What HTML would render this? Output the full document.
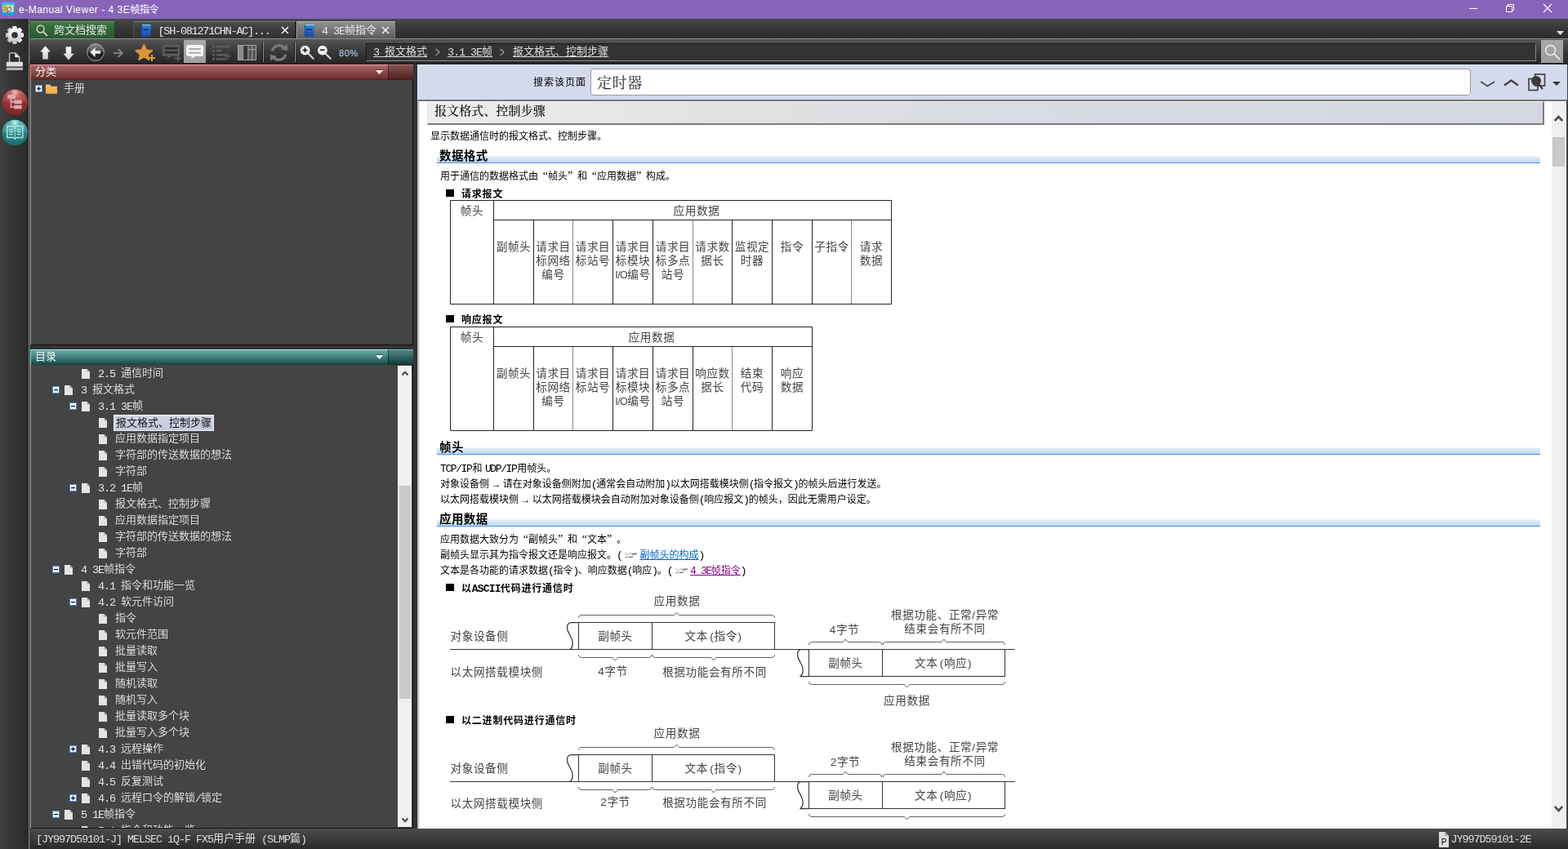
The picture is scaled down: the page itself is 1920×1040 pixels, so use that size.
<!DOCTYPE html>
<html lang="zh-CN">
<head>
<meta charset="utf-8">
<title>e-Manual Viewer - 4 3E帧指令</title>
<style>
*{box-sizing:border-box}
html,body{margin:0;padding:0;width:1920px;height:1040px;overflow:hidden;background:#333}
body{position:relative;font-family:"Liberation Mono","Noto Sans CJK SC",sans-serif;font-size:13px;color:#ddd}
.abs{position:absolute}
svg{position:absolute;overflow:visible}
#tabstrip,#crumb,#lp1,#lp2,.phead,#doc,#status,.gs{will-change:transform}
/* ---------- title bar ---------- */
#titlebar{position:absolute;left:0;top:0;width:1920px;height:23px;background:#8764b8}
#titlebar .ttl{position:absolute;left:23px;top:4px;font:12px/16px "Liberation Sans","Noto Sans CJK SC",sans-serif;color:#fff;white-space:nowrap;letter-spacing:.5px}
#titlebar .ttl b{font-weight:400;letter-spacing:-.3px}
/* ---------- tab strip ---------- */
#tabstrip{position:absolute;left:0;top:23px;width:1920px;height:24px;background:linear-gradient(#484848,#3a3a3a 40%,#2c2c2c)}
.tab{position:absolute;top:3px;height:21px;white-space:nowrap;font:13px/21px "Liberation Mono","Noto Sans CJK SC",sans-serif;font-weight:400;color:#e6e6e6}
#tab1{left:37px;width:104px;background:linear-gradient(#3f7843,#33683a 40%,#2b5a30);border-top:1px solid #5c9a5e;border-right:1px solid #1f3f22}
#tab2{left:163px;width:199px;background:linear-gradient(#4d4d4d,#3a3a3a 50%,#333);border-top:1px solid #7a7a7a;border-left:1px solid #555;border-right:1px solid #1c1c1c}
#tab3{left:363px;width:121px;height:22px;background:linear-gradient(#909090,#7a7a7a 40%,#595959);border-top:1px solid #b0b0b0;border-left:1px solid #a0a0a0;border-right:1px solid #7c7c7c;z-index:3}
.tab .t{position:absolute;top:1px;line-height:20px}
/* ---------- toolbar ---------- */
#toolbar{position:absolute;left:37px;top:47px;width:1883px;height:32px;background:linear-gradient(#585858 0,#545454 2px,#454545 9px,#383838 17px,#2e2e2e 25px,#272727 30px,#202020 32px)}
#crumb{position:absolute;left:411px;top:6px;width:1433px;height:22px;background:#333;border:1px solid #1a1a1a;border-bottom-color:#8a8a8a;border-right-color:#8a8a8a;font:13px/20px "Liberation Mono","Noto Sans CJK SC",sans-serif;font-weight:400;color:#dcdcdc;white-space:nowrap}
#crumb>span{position:absolute;top:0;text-decoration:underline;text-underline-offset:2px}
#crumb i{position:absolute;top:0;font-style:normal;color:#b4b4b4;font-family:'Liberation Sans',sans-serif;font-size:14px;transform:scale(.68,1.3);transform-origin:0 62%}
/* ---------- sidebar ---------- */
#sidebar{position:absolute;left:0;top:23px;width:37px;height:1017px;background:linear-gradient(90deg,#3f3f3f 0,#353535 16px,#2a2a2a 34px)}
/* ---------- left panel ---------- */
#lp1{position:absolute;left:37px;top:98px;width:469px;height:325px;background:#444;border-left:1px solid #979797;border-right:1px solid #151515;border-bottom:1px solid #111}
.phead{position:absolute;left:37px;width:469px;height:19px;font:13px/17px "Liberation Mono","Noto Sans CJK SC",sans-serif;font-weight:400;color:#fff}
.phead b{position:absolute;left:5px;top:1px;font-weight:400;color:#f2f2f2}
#ph1{top:79px;background:linear-gradient(#ee9c9c 0,#ee9c9c 1px,#ab6a6a 1px,#965454 35%,#7c3c3c 70%,#672b2b 94%,#4c1818 100%);border-left:1px solid #e07c7c}
#ph2{top:428px;background:linear-gradient(#a2ece8 0,#a2ece8 1px,#64aaa4 1px,#4f908c 35%,#2f6865 70%,#1d4b49 94%,#143c3c 100%);border-left:1px solid #7ad6d4}
.phead .btn{position:absolute;right:0;top:0;width:31px;height:19px;border-left:1px solid rgba(0,0,0,.45);background:rgba(0,0,0,.22)}
#lp2{position:absolute;left:37px;top:447px;width:469px;height:568px;background:#444;border-left:1px solid #979797;border-right:1px solid #151515;border-bottom:1px solid #151515;overflow:hidden}
.row{position:absolute;left:0;height:20px;white-space:nowrap;font:13px/20px "Liberation Mono","Noto Sans CJK SC",sans-serif;font-weight:350;color:#e6e6e6}
.row .tx{position:absolute;top:2px;line-height:18px}
.row .sel{top:1px;height:20px;line-height:19px;width:123px;padding-left:2px;background:linear-gradient(#d2d8e8,#c2c9db);border:1px solid #eef1f8;color:#111;font-weight:400}
.l{font-size:13.5px;letter-spacing:-1.1px;line-height:0;position:relative;top:1px}
.l14{letter-spacing:-1.4px}
.l12{font-size:13px;letter-spacing:-1.4px;line-height:0}
.ql,.qr{display:inline-block;line-height:0;width:12px;font-family:"Liberation Serif","Noto Sans CJK SC",serif;font-size:14px}
.ql{text-align:right}.qr{text-align:left}
.ar{display:inline-block;line-height:0;width:16.8px;text-align:center;font-family:"Liberation Sans","Noto Sans CJK SC",sans-serif}
.hand{display:inline-block;line-height:0;width:22px;text-align:center}
/* ---------- content ---------- */
#content{position:absolute;left:511px;top:79px;width:1409px;height:936px;background:#fff;border-right:2px solid #404040}
#sbar{position:absolute;left:0;top:0;width:1408px;height:45px;background:#d3daec;border-bottom:2px solid #747474;border-left:1px solid #e3eaff;border-top:1px solid #e3eaff;z-index:2}
#doc{position:absolute;left:0;top:44px;width:1389px;height:892px;border-left:2px solid #b9b9b9;overflow:hidden;color:#000;font:12px/19px "Liberation Mono","Noto Sans CJK SC",sans-serif;font-weight:400}
.p{position:absolute;white-space:nowrap;line-height:16px}
.h2{position:absolute;left:22px;width:1351px;height:17px;background:linear-gradient(rgba(255,255,255,0) 0,rgba(255,255,255,0) 7px,#e4edf8 8px,#c5d9ee 14.5px,#3f92ea 15.2px,#3f92ea 16.4px,rgba(255,255,255,0) 16.5px)}
.h2 b{position:absolute;left:3px;top:0px;font:700 14.5px/16px "Liberation Mono","Noto Sans CJK SC",sans-serif;white-space:nowrap;letter-spacing:.4px}
.h3{position:absolute;white-space:nowrap;font:700 12px/16px "Liberation Mono","Noto Sans CJK SC",sans-serif;letter-spacing:.8px}
.h3 .l12{font-weight:700;letter-spacing:-.8px}
.sq{position:absolute;width:10px;height:9px;background:#000}
a.lk{color:#0066cc;text-decoration:underline;text-underline-offset:1px}
a.vl{color:#800080;text-decoration:underline;text-underline-offset:1px}
.fig{font-family:"Liberation Sans","Noto Sans CJK SC",sans-serif}
/* ---------- status bar ---------- */
.st{line-height:22px;height:22px;margin-top:1.5px}
#status{position:absolute;left:37px;top:1015px;width:1883px;height:25px;background:linear-gradient(#4b4b4b,#3c3c3c 45%,#2b2b2b);font:13px/22px "Liberation Mono","Noto Sans CJK SC",sans-serif;font-weight:400;color:#dcdcdc;white-space:nowrap}
</style>
</head>
<body>
<!-- ================= TITLE BAR ================= -->
<div id="titlebar">
  <svg style="left:2px;top:3px" width="16" height="16" viewBox="0 0 16 16">
    <defs><linearGradient id="gIco" x1="0" y1="0" x2="0" y2="1"><stop offset="0" stop-color="#2fc4ff"/><stop offset=".5" stop-color="#22aef6"/><stop offset="1" stop-color="#1a9cf0"/></linearGradient>
    <linearGradient id="gGold" x1="0" y1="0" x2="1" y2="1"><stop offset="0" stop-color="#f6d860"/><stop offset="1" stop-color="#d79a14"/></linearGradient></defs>
    <rect x="0" y="0" width="16" height="16" rx="1" fill="url(#gIco)"/>
    <path d="M7 3.2 H14.6 V11.6 H7 Z" fill="#fbf6ea"/>
    <path d="M9.6 2.6 V8 M11.4 2.4 V8 M14.2 3.2 V11.4" stroke="#c99a2a" stroke-width="1"/>
    <path d="M1.4 4.4 L5.2 2.4 L6.9 3 V11.4 L3.2 12 L1.4 11 Z" fill="url(#gGold)"/>
    <path d="M3 5.6 h2 M3 8.6 h1.6" stroke="#a06a08" stroke-width="1.2"/>
    <path d="M2.2 11.4 L7.6 10.8 L13.8 11.4" stroke="#d8cfa8" stroke-width=".9" fill="none"/>
    <circle cx="9.4" cy="8.3" r="2.5" fill="#cfe0d6" fill-opacity=".85" stroke="#23a070" stroke-width="1.1"/>
    <path d="M7.8 10.6 L6 13.6" stroke="#ea5a14" stroke-width="1.5"/>
  </svg>
  <div class="ttl">e-Manual Viewer - 4 3E<b>帧指令</b></div>
  <svg style="left:1799px;top:10px" width="10" height="1"><rect width="10" height="1" fill="#fff"/></svg>
  <svg style="left:1844px;top:5px" width="10" height="10" viewBox="0 0 10 10"><path d="M2.5 2.5 V.5 H9.5 V7.5 H7.5" fill="none" stroke="#fff" stroke-width="1"/><rect x=".5" y="2.5" width="7" height="7" fill="none" stroke="#fff" stroke-width="1"/></svg>
  <svg style="left:1890px;top:5px" width="10" height="10" viewBox="0 0 10 10"><path d="M0 0 L10 10 M10 0 L0 10" stroke="#fff" stroke-width="1.1"/></svg>
</div>

<!-- ================= TAB STRIP ================= -->
<div id="tabstrip">
  <div class="tab" id="tab1">
    <svg style="left:7px;top:3px" width="15" height="15" viewBox="0 0 15 15"><circle cx="5.6" cy="5.6" r="4.4" fill="none" stroke="#e2e2e2" stroke-width="1.3"/><path d="M8.8 8.8 L13.4 13.4" stroke="#e2e2e2" stroke-width="1.6" stroke-linecap="round"/></svg>
    <span class="t" style="left:29px">跨文档搜索</span>
  </div>
  <div class="tab" id="tab2">
    <svg class="book" style="left:8px;top:3px" width="13" height="15" viewBox="0 0 13 16" preserveAspectRatio="none"><use href="#book"/></svg>
    <span class="t" style="left:29.5px"><span class="l" style="letter-spacing:-1.25px">[SH-081271CHN-AC]...</span></span>
    <svg style="left:180px;top:5px" width="10" height="10" viewBox="0 0 10 10"><path d="M1 1 L9 9 M9 1 L1 9" stroke="#f0f0f0" stroke-width="1.6"/></svg>
  </div>
  <div class="tab" id="tab3">
    <svg class="book" style="left:8px;top:3px" width="13" height="15" viewBox="0 0 13 16" preserveAspectRatio="none"><use href="#book"/></svg>
    <span class="t" style="left:30px"><span class="l">4 3E</span>帧指令</span>
    <svg style="left:103px;top:5px" width="10" height="10" viewBox="0 0 10 10"><path d="M1 1 L9 9 M9 1 L1 9" stroke="#f0f0f0" stroke-width="1.6"/></svg>
  </div>
  <svg style="left:1906px;top:15px" width="9" height="5" viewBox="0 0 9 5"><path d="M0 0 H9 L4.5 5 Z" fill="#e0e0e0"/></svg>
</div>
<svg width="0" height="0" style="left:0;top:0"><defs>
  <linearGradient id="gBook" x1="0" y1="0" x2="0" y2="1"><stop offset="0" stop-color="#2f86dc"/><stop offset=".5" stop-color="#1f67c4"/><stop offset="1" stop-color="#17479e"/></linearGradient>
  <g id="book">
    <path d="M1.5 1.2 Q1.5 0 3 0 H12.5 V1.6 H3 Z" fill="#7fd4f5"/>
    <rect x="1" y="1.4" width="11.6" height="14.4" rx="1" fill="url(#gBook)"/>
    <rect x="3.4" y="5.6" width="6.6" height="1.9" fill="#0b2f86"/>
    <rect x="1" y="1.4" width="1.3" height="14.4" fill="#0d4fb0"/>
  </g>
</defs></svg>

<!-- ================= SIDEBAR ================= -->
<div id="sidebar">
  <div class="abs" style="left:35px;top:0;width:1px;height:1017px;background:#828282"></div>
  <div class="abs" style="left:36px;top:0;width:1px;height:1017px;background:#444"></div>
  <!-- gear -->
  <svg style="left:7px;top:9px" width="22" height="22" viewBox="-11 -11 22 22">
    <defs><linearGradient id="gGear" x1="0" y1="0" x2="0" y2="1"><stop offset="0" stop-color="#ffffff"/><stop offset="1" stop-color="#c6c6c6"/></linearGradient></defs>
    <g fill="url(#gGear)">
      <rect x="-2.7" y="-11" width="5.4" height="22" rx="1.4"/><rect x="-2.7" y="-11" width="5.4" height="22" rx="1.4" transform="rotate(45)"/><rect x="-2.7" y="-11" width="5.4" height="22" rx="1.4" transform="rotate(90)"/><rect x="-2.7" y="-11" width="5.4" height="22" rx="1.4" transform="rotate(135)"/>
      <circle r="8.4"/>
    </g>
    <circle r="3.8" fill="#333"/>
  </svg>
  <!-- printer -->
  <svg style="left:7px;top:41px" width="22" height="23" viewBox="0 0 22 23">
    <path d="M4.6 13 V2 Q4.6 .9 5.7 .9 H11.8 L16.7 5.8 V13" fill="#2e2e2e" stroke="#c9c9c9" stroke-width="1.3"/>
    <path d="M11.4 .9 V6.2 H16.7 Z" fill="#f2f2f2"/>
    <rect x=".8" y="11.8" width="20.2" height="5.8" rx="1" fill="#dedede"/>
    <rect x=".8" y="18.8" width="20.2" height="3.2" fill="#b4b4b4"/>
  </svg>
  <!-- red ball -->
  <svg style="left:2px;top:86px" width="33" height="33" viewBox="0 0 33 33">
    <defs>
      <radialGradient id="gRed" cx=".5" cy=".12" r=".95"><stop offset="0" stop-color="#f0c4c4"/><stop offset=".18" stop-color="#c46a6a"/><stop offset=".5" stop-color="#a84040"/><stop offset="1" stop-color="#7a2424"/></radialGradient>
      <radialGradient id="gTeal" cx=".5" cy=".12" r=".95"><stop offset="0" stop-color="#c8f4f0"/><stop offset=".18" stop-color="#62bcbc"/><stop offset=".5" stop-color="#3a9c9c"/><stop offset="1" stop-color="#146a6a"/></radialGradient>
    </defs>
    <circle cx="16.2" cy="16.3" r="15.7" fill="url(#gRed)"/>
    <path d="M.6 15.8 A15.6 15.6 0 0 0 31.8 15.8 Z" fill="#7e1f22" opacity=".42"/>
    <g fill="#dcaeae"><rect x="7.4" y="7.2" width="9.6" height="4.6"/><rect x="15.4" y="13.6" width="9.2" height="4.6"/><rect x="15.4" y="19.8" width="9.2" height="4.6"/></g>
    <path d="M11.4 11.8 V22.2 H15.4 M11.4 16 H15.4" fill="none" stroke="#dcaeae" stroke-width="1.4"/>
  </svg>
  <!-- teal ball -->
  <svg style="left:2px;top:123px" width="33" height="33" viewBox="0 0 33 33">
    <circle cx="16.2" cy="16.4" r="15.7" fill="url(#gTeal)"/>
    <path d="M.6 15.9 A15.6 15.6 0 0 0 31.8 15.9 Z" fill="#0f6c6e" opacity=".42"/>
    <path d="M6.8 8.6 H14.4 L16.3 10 L18.2 8.6 H25.8 V22.6 H18.2 L16.3 24 L14.4 22.6 H6.8 Z" fill="none" stroke="#b2e4e0" stroke-width="1.5"/>
    <path d="M16.3 10.4 V22.6" stroke="#b2e4e0" stroke-width="1"/>
    <path d="M9.2 12.4 H13.8 M9.2 15.4 H13.8 M9.2 18.4 H13.8 M18.8 12.4 H23.4 M18.8 15.4 H23.4 M18.8 18.4 H23.4" stroke="#b2e4e0" stroke-width="1.5" fill="none"/>
  </svg>
</div>

<!-- ================= TOOLBAR ================= -->
<div id="toolbar">
  <div class="abs" style="left:0;top:0;width:1883px;height:1px;background:#8c8c8c"></div>
  <!-- up / down arrows -->
  <svg style="left:12px;top:9px" width="13" height="17" viewBox="0 0 13 17"><defs><linearGradient id="gW" x1="0" y1="0" x2="0" y2="1"><stop offset="0" stop-color="#fff"/><stop offset="1" stop-color="#cdcdcd"/></linearGradient></defs><path d="M6.5 .3 L12.8 7.6 H9.8 V16.5 H3.2 V7.6 H.2 Z" fill="url(#gW)"/></svg>
  <svg style="left:40px;top:10px" width="14" height="17" viewBox="0 0 14 17"><path d="M7 16.4 L13.6 8.8 H10.3 V.3 H3.7 V8.8 H.4 Z" fill="url(#gW)"/></svg>
  <!-- back -->
  <svg style="left:69px;top:6px" width="22" height="22" viewBox="0 0 22 22">
    <defs><linearGradient id="gBk" x1="0" y1="0" x2="0" y2="1"><stop offset="0" stop-color="#8c8c8c"/><stop offset=".45" stop-color="#4e4e4e"/><stop offset=".55" stop-color="#1e1e1e"/><stop offset="1" stop-color="#2c2c2c"/></linearGradient></defs>
    <circle cx="11" cy="11" r="10.4" fill="url(#gBk)" stroke="#a6a6a6" stroke-width="1"/>
    <path d="M4.3 11 L10.6 5 V9.2 H17 V12.8 H10.6 V17 Z" fill="#f4f4f4"/>
  </svg>
  <!-- forward -->
  <svg style="left:102px;top:12px" width="12" height="12" viewBox="0 0 12 12"><path d="M0 6 H10 M5.6 1 L10.6 6 L5.6 11" fill="none" stroke="#808080" stroke-width="2"/></svg>
  <!-- star -->
  <svg style="left:128px;top:6px" width="26" height="23" viewBox="0 0 26 23"><path d="M11.3 1.6 L14.1 8.4 L21.2 9 L15.8 13.7 L17.5 20.3 L11.3 16.6 L5.1 20.3 L6.8 13.7 L1.4 9 L8.5 8.4 Z" fill="#dc9534" stroke="#dc9534" stroke-width="1.8" stroke-linejoin="round"/><path d="M21 14 V22 M17 18 H25" stroke="#e39a35" stroke-width="2"/></svg>
  <!-- comment add -->
  <svg style="left:161px;top:7px" width="25" height="22" viewBox="0 0 25 22"><path d="M3.4 .8 H19.6 Q22.2 .8 22.2 3.4 V12.2 Q22.2 14.8 19.6 14.8 H12.4 L5.4 18.8 L8 14.8 H3.4 Q.8 14.8 .8 12.2 V3.4 Q.8 .8 3.4 .8 Z" fill="#5a5a5a"/><rect x="3.6" y="3.9" width="15.8" height="2.5" fill="#262626"/><rect x="3.6" y="8.9" width="15.8" height="2.5" fill="#262626"/><path d="M19.9 13.4 V21.4 M15.9 17.4 H23.9" stroke="#606060" stroke-width="2"/></svg>
  <!-- comment active -->
  <div class="abs" style="left:188px;top:2px;width:27px;height:28px;background:linear-gradient(#a9a9a9,#a2a2a2)"></div>
  <svg style="left:191px;top:8px" width="21" height="18" viewBox="0 0 21 18"><path d="M3 0 H18 Q21 0 21 3 V11 Q21 14 18 14 H11.5 L5 17.6 L7.5 14 H3 Q0 14 0 11 V3 Q0 0 3 0 Z" fill="#f4f4f4"/><path d="M3.4 5 H17.8 M3.4 9.8 H17.8" stroke="#adadad" stroke-width="2"/></svg>
  <!-- list add -->
  <svg style="left:223px;top:9px" width="24" height="19" viewBox="0 0 24 19"><g fill="#5a5a5a"><rect x="0" y="0" width="3" height="2.6"/><rect x="5" y="0" width="16" height="2.6"/><rect x="0" y="4.8" width="3" height="2.6"/><rect x="5" y="4.8" width="7" height="2.6"/><rect x="0" y="10" width="3" height="2.6"/><rect x="5" y="10" width="12" height="2.6"/><rect x="0" y="15.2" width="3" height="2.6"/><rect x="5" y="15.2" width="12" height="2.6"/></g><path d="M18.5 9 V17 M15 12.8 H22.5" stroke="#5e5e5e" stroke-width="1.6"/></svg>
  <!-- columns -->
  <svg style="left:254px;top:8px" width="23" height="19" viewBox="0 0 23 19"><rect x=".5" y=".5" width="22" height="18" fill="#333" stroke="#a8a8a8" stroke-width="1"/><rect x="1" y="1" width="6.3" height="17" fill="#8c8c8c"/><rect x="13" y="1" width="9" height="17" fill="#555"/><path d="M12.8 1 V18 M17.8 1 V18 M12.8 5.6 H22" stroke="#a8a8a8" stroke-width="1"/></svg>
  <div class="abs" style="left:284px;top:4px;width:1px;height:25px;background:#121212"></div>
  <div class="abs" style="left:285px;top:4px;width:1px;height:25px;background:#8e8e8e"></div>
  <!-- refresh -->
  <svg style="left:293px;top:6px" width="23" height="23" viewBox="0 0 23 23"><path d="M3.4 9.6 A8.2 8.2 0 0 1 17.6 5.4" fill="none" stroke="#787878" stroke-width="3.4"/><path d="M14 7.6 L22.4 9 L21.6 1.2 Z" fill="#787878"/><path d="M19.6 13.4 A8.2 8.2 0 0 1 5.4 17.6" fill="none" stroke="#787878" stroke-width="3.4"/><path d="M9 15.4 L.6 14 L1.4 21.8 Z" fill="#787878"/></svg>
  <div class="abs" style="left:323px;top:4px;width:1px;height:25px;background:#121212"></div>
  <div class="abs" style="left:324px;top:4px;width:1px;height:25px;background:#8e8e8e"></div>
  <!-- zoom in / out -->
  <svg style="left:330px;top:8px" width="19" height="19" viewBox="0 0 19 19"><path d="M10 10 L16.6 16.8" stroke="#d4d4d4" stroke-width="2.2" stroke-linecap="round"/><circle cx="6.6" cy="6.6" r="5.9" fill="#eeeeee"/><path d="M3.6 6.4 H9.4 M6.5 3.5 V9.3" stroke="#0a0a0a" stroke-width="1.5"/></svg>
  <svg style="left:351px;top:8px" width="19" height="19" viewBox="0 0 19 19"><path d="M10 10 L16.6 16.8" stroke="#d4d4d4" stroke-width="2.2" stroke-linecap="round"/><circle cx="6.9" cy="6.6" r="5.9" fill="#eeeeee"/><path d="M4 6.2 H9.6" stroke="#0a0a0a" stroke-width="1.5"/></svg>
  <div class="abs" style="left:378px;top:11px;font:11px/14px 'Liberation Sans',sans-serif;color:#bcd6f4;letter-spacing:.55px">80%</div>
  <div id="crumb">
    <span style="left:8px"><span class="l">3 </span>报文格式</span>
    <i style="left:84px">&gt;</i>
    <span style="left:99px"><span class="l">3.1 3E</span>帧</span>
    <i style="left:163px">&gt;</i>
    <span style="left:179px">报文格式、控制步骤</span>
  </div>
  <div class="abs" style="left:1850px;top:2px;width:27px;height:28px;background:linear-gradient(#a9a9a9,#9c9c9c)"></div>
  <svg style="left:1854px;top:7px" width="20" height="20" viewBox="0 0 20 20"><circle cx="7.6" cy="7.6" r="6" fill="none" stroke="#f0f0f0" stroke-width="1.5"/><path d="M12 12 L18.4 18.4" stroke="#f0f0f0" stroke-width="1.7" stroke-linecap="round"/></svg>
</div>
<!-- ================= LEFT PANEL ================= -->
<div class="phead" id="ph1"><b>分类</b><div class="btn"></div><svg style="left:422px;top:7px" width="9" height="5" viewBox="0 0 9 5"><path d="M0 -.6 H9" stroke="#123" stroke-opacity=".55" stroke-width="1"/><path d="M0 0 H9 L4.5 5 Z" fill="#fff"/></svg></div>
<div id="lp1">
  <svg style="left:5px;top:6px" width="9" height="9" viewBox="0 0 9 9"><use href="#exP"/></svg>
  <svg style="left:18px;top:5px" width="14" height="12" viewBox="0 0 15 12"><path d="M0 1 Q0 0 1 0 H5.5 L7.5 2.5 H14 Q15 2.5 15 3.5 V11 Q15 12 14 12 H1 Q0 12 0 11 Z" fill="#f0bd60"/><path d="M0 4 H15 V11 Q15 12 14 12 H1 Q0 12 0 11 Z" fill="#eeb453"/></svg>
  <div class="row" style="left:40px;top:0px"><span class="tx" style="left:0">手册</span></div>
</div>
<div class="phead" id="ph2"><b>目录</b><div class="btn"></div><svg style="left:422px;top:7px" width="9" height="5" viewBox="0 0 9 5"><path d="M0 -.6 H9" stroke="#123" stroke-opacity=".55" stroke-width="1"/><path d="M0 0 H9 L4.5 5 Z" fill="#fff"/></svg></div>
<svg width="0" height="0" style="left:0;top:0"><defs>
  <g id="exM"><rect x=".5" y=".5" width="8" height="8" fill="#fff" stroke="#4b86ea" stroke-width="1"/><rect x="2" y="4" width="5" height="1.2" fill="#000"/></g>
  <g id="exP"><rect x=".5" y=".5" width="8" height="8" fill="#fff" stroke="#4b86ea" stroke-width="1"/><rect x="2" y="4" width="5" height="1.2" fill="#000"/><rect x="3.9" y="2" width="1.2" height="5" fill="#000"/></g>
  <g id="doc"><path d="M0 0 H6.5 L10 3.5 V12 H0 Z" fill="#e4e4e4"/><path d="M6.5 0 L10 3.5 H6.5 Z" fill="#a8a8a8"/></g>
</defs></svg>
<div id="lp2">
<div class="row" style="top:0px"><svg style="left:62px;top:5px" width="10" height="12" viewBox="0 0 10 12"><use href="#doc"/></svg><span class="tx" style="left:82px"><span class="l">2.5 </span>通信时间</span></div>
<div class="row" style="top:20px"><svg style="left:26px;top:6px" width="9" height="9" viewBox="0 0 9 9"><use href="#exM"/></svg><svg style="left:41px;top:5px" width="10" height="12" viewBox="0 0 10 12"><use href="#doc"/></svg><span class="tx" style="left:61px"><span class="l">3 </span>报文格式</span></div>
<div class="row" style="top:40px"><svg style="left:47px;top:6px" width="9" height="9" viewBox="0 0 9 9"><use href="#exM"/></svg><svg style="left:62px;top:5px" width="10" height="12" viewBox="0 0 10 12"><use href="#doc"/></svg><span class="tx" style="left:82px"><span class="l">3.1 3E</span>帧</span></div>
<div class="row" style="top:60px"><svg style="left:83px;top:5px" width="10" height="12" viewBox="0 0 10 12"><use href="#doc"/></svg><span class="tx sel" style="left:101px">报文格式、控制步骤</span></div>
<div class="row" style="top:80px"><svg style="left:83px;top:5px" width="10" height="12" viewBox="0 0 10 12"><use href="#doc"/></svg><span class="tx" style="left:103px">应用数据指定项目</span></div>
<div class="row" style="top:100px"><svg style="left:83px;top:5px" width="10" height="12" viewBox="0 0 10 12"><use href="#doc"/></svg><span class="tx" style="left:103px">字符部的传送数据的想法</span></div>
<div class="row" style="top:120px"><svg style="left:83px;top:5px" width="10" height="12" viewBox="0 0 10 12"><use href="#doc"/></svg><span class="tx" style="left:103px">字符部</span></div>
<div class="row" style="top:140px"><svg style="left:47px;top:6px" width="9" height="9" viewBox="0 0 9 9"><use href="#exM"/></svg><svg style="left:62px;top:5px" width="10" height="12" viewBox="0 0 10 12"><use href="#doc"/></svg><span class="tx" style="left:82px"><span class="l">3.2 1E</span>帧</span></div>
<div class="row" style="top:160px"><svg style="left:83px;top:5px" width="10" height="12" viewBox="0 0 10 12"><use href="#doc"/></svg><span class="tx" style="left:103px">报文格式、控制步骤</span></div>
<div class="row" style="top:180px"><svg style="left:83px;top:5px" width="10" height="12" viewBox="0 0 10 12"><use href="#doc"/></svg><span class="tx" style="left:103px">应用数据指定项目</span></div>
<div class="row" style="top:200px"><svg style="left:83px;top:5px" width="10" height="12" viewBox="0 0 10 12"><use href="#doc"/></svg><span class="tx" style="left:103px">字符部的传送数据的想法</span></div>
<div class="row" style="top:220px"><svg style="left:83px;top:5px" width="10" height="12" viewBox="0 0 10 12"><use href="#doc"/></svg><span class="tx" style="left:103px">字符部</span></div>
<div class="row" style="top:240px"><svg style="left:26px;top:6px" width="9" height="9" viewBox="0 0 9 9"><use href="#exM"/></svg><svg style="left:41px;top:5px" width="10" height="12" viewBox="0 0 10 12"><use href="#doc"/></svg><span class="tx" style="left:61px"><span class="l">4 3E</span>帧指令</span></div>
<div class="row" style="top:260px"><svg style="left:62px;top:5px" width="10" height="12" viewBox="0 0 10 12"><use href="#doc"/></svg><span class="tx" style="left:82px"><span class="l">4.1 </span>指令和功能一览</span></div>
<div class="row" style="top:280px"><svg style="left:47px;top:6px" width="9" height="9" viewBox="0 0 9 9"><use href="#exM"/></svg><svg style="left:62px;top:5px" width="10" height="12" viewBox="0 0 10 12"><use href="#doc"/></svg><span class="tx" style="left:82px"><span class="l">4.2 </span>软元件访问</span></div>
<div class="row" style="top:300px"><svg style="left:83px;top:5px" width="10" height="12" viewBox="0 0 10 12"><use href="#doc"/></svg><span class="tx" style="left:103px">指令</span></div>
<div class="row" style="top:320px"><svg style="left:83px;top:5px" width="10" height="12" viewBox="0 0 10 12"><use href="#doc"/></svg><span class="tx" style="left:103px">软元件范围</span></div>
<div class="row" style="top:340px"><svg style="left:83px;top:5px" width="10" height="12" viewBox="0 0 10 12"><use href="#doc"/></svg><span class="tx" style="left:103px">批量读取</span></div>
<div class="row" style="top:360px"><svg style="left:83px;top:5px" width="10" height="12" viewBox="0 0 10 12"><use href="#doc"/></svg><span class="tx" style="left:103px">批量写入</span></div>
<div class="row" style="top:380px"><svg style="left:83px;top:5px" width="10" height="12" viewBox="0 0 10 12"><use href="#doc"/></svg><span class="tx" style="left:103px">随机读取</span></div>
<div class="row" style="top:400px"><svg style="left:83px;top:5px" width="10" height="12" viewBox="0 0 10 12"><use href="#doc"/></svg><span class="tx" style="left:103px">随机写入</span></div>
<div class="row" style="top:420px"><svg style="left:83px;top:5px" width="10" height="12" viewBox="0 0 10 12"><use href="#doc"/></svg><span class="tx" style="left:103px">批量读取多个块</span></div>
<div class="row" style="top:440px"><svg style="left:83px;top:5px" width="10" height="12" viewBox="0 0 10 12"><use href="#doc"/></svg><span class="tx" style="left:103px">批量写入多个块</span></div>
<div class="row" style="top:460px"><svg style="left:47px;top:6px" width="9" height="9" viewBox="0 0 9 9"><use href="#exP"/></svg><svg style="left:62px;top:5px" width="10" height="12" viewBox="0 0 10 12"><use href="#doc"/></svg><span class="tx" style="left:82px"><span class="l">4.3 </span>远程操作</span></div>
<div class="row" style="top:480px"><svg style="left:62px;top:5px" width="10" height="12" viewBox="0 0 10 12"><use href="#doc"/></svg><span class="tx" style="left:82px"><span class="l">4.4 </span>出错代码的初始化</span></div>
<div class="row" style="top:500px"><svg style="left:62px;top:5px" width="10" height="12" viewBox="0 0 10 12"><use href="#doc"/></svg><span class="tx" style="left:82px"><span class="l">4.5 </span>反复测试</span></div>
<div class="row" style="top:520px"><svg style="left:47px;top:6px" width="9" height="9" viewBox="0 0 9 9"><use href="#exP"/></svg><svg style="left:62px;top:5px" width="10" height="12" viewBox="0 0 10 12"><use href="#doc"/></svg><span class="tx" style="left:82px"><span class="l">4.6 </span>远程口令的解锁<span class="l">/</span>锁定</span></div>
<div class="row" style="top:540px"><svg style="left:26px;top:6px" width="9" height="9" viewBox="0 0 9 9"><use href="#exM"/></svg><svg style="left:41px;top:5px" width="10" height="12" viewBox="0 0 10 12"><use href="#doc"/></svg><span class="tx" style="left:61px"><span class="l">5 </span><span class="l">1E</span>帧指令</span></div>
<div class="row" style="top:560px"><svg style="left:62px;top:5px" width="10" height="12" viewBox="0 0 10 12"><use href="#doc"/></svg><span class="tx" style="left:82px"><span class="l">5.1 </span>指令和功能一览</span></div>
<div class="abs" style="left:449px;top:1px;width:17px;height:565px;background:#f0f0f0"></div>
<div class="abs" style="left:451px;top:148px;width:14px;height:261px;background:#c9c9c9"></div>
<svg style="left:454px;top:7px" width="8" height="6" viewBox="0 0 8 6"><path d="M.5 5.6 L4 1.8 L7.5 5.6" fill="none" stroke="#505050" stroke-width="2.2"/></svg>
<svg style="left:454px;top:555px" width="8" height="6" viewBox="0 0 8 6"><path d="M.5 .4 L4 4.2 L7.5 .4" fill="none" stroke="#505050" stroke-width="2.2"/></svg>
</div>
<!-- ================= CONTENT ================= -->
<div id="content">
<div id="sbar">
  <div class="abs gs" style="left:141px;top:14px;font:12px/16px 'Liberation Mono','Noto Sans CJK SC',sans-serif;font-weight:400;color:#000;letter-spacing:1px;white-space:nowrap">搜索该页面</div>
  <div class="abs" style="left:211px;top:4px;width:1078px;height:33px;background:#fff;border:1px solid #9a9a9a;border-radius:4px"></div>
  <div class="abs" style="left:219px;top:10px;font:18px/24px 'Liberation Serif','Noto Serif CJK SC',serif;color:#2a2a2a;letter-spacing:.6px;white-space:nowrap">定时器</div>
  <svg style="left:1300px;top:19px" width="19" height="8" viewBox="0 0 19 8"><path d="M1 1 L9.5 6.5 L18 1" fill="none" stroke="#4a4a4a" stroke-width="1.7"/></svg>
  <svg style="left:1329px;top:17px" width="19" height="9" viewBox="0 0 19 9"><path d="M1 7.5 L9.5 1.5 L18 7.5" fill="none" stroke="#3a3a3a" stroke-width="2.2"/></svg>
  <svg style="left:1359px;top:10px" width="23" height="22" viewBox="0 0 23 22"><rect x="8.5" y="1" width="12" height="14" fill="none" stroke="#3a3a3a" stroke-width="1.6"/><rect x="1" y="6.5" width="11" height="14" fill="none" stroke="#3a3a3a" stroke-width="1.6"/><circle cx="10" cy="9" r="6" fill="#3a3a3a"/><path d="M13 13 L18 19" stroke="#3a3a3a" stroke-width="2"/></svg>
  <svg style="left:1389px;top:20px" width="10" height="5" viewBox="0 0 10 5"><path d="M0 0 H10 L5 5 Z" fill="#333"/></svg>
</div>
<div id="doc">
<div class="abs" style="left:10px;top:1px;width:1368px;height:29px;background:linear-gradient(100deg,#ededed 0,#e2e2e2 25%,#d9dce2 50%,#d2d7e0 100%);border-top:1px solid #f4f4f4;border-left:1px solid #e8e8e8;border-bottom:2px solid #7c7c7c;border-right:2px solid #7c7c7c"><span class="abs" style="left:8px;top:3px;font:15px/20px 'Liberation Mono','Noto Serif CJK SC',serif;font-weight:500;color:#0a0a0a;white-space:nowrap;letter-spacing:.1px">报文格式、控制步骤</span></div>
<div class="p" style="left:14px;top:37px">显示数据通信时的报文格式、控制步骤。</div>
<div class="h2" style="top:61px"><b>数据格式</b></div>
<div class="p" style="left:26px;top:86px">用于通信的数据格式由<span class="ql">“</span>帧头<span class="qr">”</span>和<span class="ql">“</span>应用数据<span class="qr">”</span>构成。</div>
<div class="sq" style="left:33px;top:109px"></div>
<div class="h3" style="left:52px;top:108px">请求报文</div>
<div class="sq" style="left:33px;top:263px"></div>
<div class="h3" style="left:52px;top:262px">响应报文</div>
<div class="h2" style="top:418px"><b>帧头</b></div>
<div class="p" style="left:26px;top:444px"><span class="l12">TCP/IP</span><span style="margin:0 3.5px 0 1px">和</span><span class="l12">UDP/IP</span><span style="margin-left:1px">用帧头。</span></div>
<div class="p" style="left:26px;top:463px">对象设备侧<span class="ar">→</span>请在对象设备侧附加<span class="l12">(</span>通常会自动附加<span class="l12">)</span>以太网搭载模块侧<span class="l12">(</span>指令报文<span class="l12">)</span>的帧头后进行发送。</div>
<div class="p" style="left:26px;top:482px">以太网搭载模块侧<span class="ar">→</span>以太网搭载模块会自动附加对象设备侧<span class="l12">(</span>响应报文<span class="l12">)</span>的帧头，因此无需用户设定。</div>
<div class="h2" style="top:506px"><b>应用数据</b></div>
<div class="p" style="left:26px;top:531px">应用数据大致分为<span class="ql">“</span>副帧头<span class="qr">”</span>和<span class="ql">“</span>文本<span class="qr">”</span>。</div>
<div class="p" style="left:26px;top:550px">副帧头显示其为指令报文还是响应报文。<span class="l12">(</span><span class="hand"><svg width="17" height="8" viewBox="0 0 17 8" style="position:static;vertical-align:0"><path d="M1 1.2 L3.5 3.4 M1.2 6.6 H4" stroke="#9a9a9a" stroke-width="1" fill="none"/><path d="M4 3.3 Q8 .6 12 1.8 L16.2 1.6 Q16.6 2.6 15 3 L11.5 3.6 Q12 6.6 9.5 6.6 H4.5 Q3.6 5 4 3.3 Z" fill="#f1f1f1" stroke="#b5b5b5" stroke-width=".8"/><path d="M9.5 3.1 L15.6 2.1 M6 6.4 H10.6" stroke="#5c5c5c" stroke-width="1" fill="none"/></svg></span><a class="lk">副帧头的构成</a><span class="l12">)</span></div>
<div class="p" style="left:26px;top:569px">文本是各功能的请求数据<span class="l12">(</span>指令<span class="l12">)</span>、响应数据<span class="l12">(</span>响应<span class="l12">)</span>。<span class="l12">(</span><span class="hand"><svg width="17" height="8" viewBox="0 0 17 8" style="position:static;vertical-align:0"><path d="M1 1.2 L3.5 3.4 M1.2 6.6 H4" stroke="#9a9a9a" stroke-width="1" fill="none"/><path d="M4 3.3 Q8 .6 12 1.8 L16.2 1.6 Q16.6 2.6 15 3 L11.5 3.6 Q12 6.6 9.5 6.6 H4.5 Q3.6 5 4 3.3 Z" fill="#f1f1f1" stroke="#b5b5b5" stroke-width=".8"/><path d="M9.5 3.1 L15.6 2.1 M6 6.4 H10.6" stroke="#5c5c5c" stroke-width="1" fill="none"/></svg></span><a class="vl"><span class="l12">4 3E</span>帧指令</a><span class="l12">)</span></div>
<div class="sq" style="left:33px;top:592px"></div>
<div class="h3" style="left:52px;top:591px">以<span class="l12">ASCII</span>代码进行通信时</div>
<div class="sq" style="left:33px;top:754px"></div>
<div class="h3" style="left:52px;top:753px">以二进制代码进行通信时</div>
<svg class="fig" style="left:0;top:0" width="1387" height="891" viewBox="513 123 1387 891">
<g font-size="13.6" fill="#454545" text-anchor="middle" letter-spacing=".6">
<g fill="none" stroke="#2a2220" stroke-width="1">
<path d="M551.5 245.5 H1091.5 V372.5 H551.5 Z"/>
<path d="M604.5 245.5 V372.5 M604.5 269.5 H1091.5"/>
<path d="M653.5 269.5 V372.5"/>
<path d="M701.5 270.0 V372.0" stroke="#8f8a88"/>
<path d="M750.5 269.5 V372.5"/>
<path d="M799.5 269.5 V372.5"/>
<path d="M848.5 270.0 V372.0" stroke="#8f8a88"/>
<path d="M896.5 269.5 V372.5"/>
<path d="M945.5 269.5 V372.5"/>
<path d="M994.5 269.5 V372.5"/>
<path d="M1042.5 270.0 V372.0" stroke="#8f8a88"/>
</g>
<text x="578.0" y="262.6">帧头</text>
<text x="853.0" y="262.6">应用数据</text>
<text x="629.0" y="307.0">副帧头</text>
<text x="677.5" y="307.0">请求目</text>
<text x="677.5" y="324.0">标网络</text>
<text x="677.5" y="341.0">编号</text>
<text x="726.0" y="307.0">请求目</text>
<text x="726.0" y="324.0">标站号</text>
<text x="775.0" y="307.0">请求目</text>
<text x="775.0" y="324.0">标模块</text>
<text x="775.0" y="341.0"><tspan font-size="12.5" letter-spacing="-.6">I/O</tspan>编号</text>
<text x="824.0" y="307.0">请求目</text>
<text x="824.0" y="324.0">标多点</text>
<text x="824.0" y="341.0">站号</text>
<text x="872.5" y="307.0">请求数</text>
<text x="872.5" y="324.0">据长</text>
<text x="921.0" y="307.0">监视定</text>
<text x="921.0" y="324.0">时器</text>
<text x="970.0" y="307.0">指令</text>
<text x="1018.5" y="307.0">子指令</text>
<text x="1067.0" y="307.0">请求</text>
<text x="1067.0" y="324.0">数据</text>
<g fill="none" stroke="#2a2220" stroke-width="1">
<path d="M551.5 400.5 H994.5 V527.5 H551.5 Z"/>
<path d="M604.5 400.5 V527.5 M604.5 424.5 H994.5"/>
<path d="M653.5 424.5 V527.5"/>
<path d="M701.5 425.0 V527.0" stroke="#8f8a88"/>
<path d="M750.5 424.5 V527.5"/>
<path d="M799.5 424.5 V527.5"/>
<path d="M848.5 424.5 V527.5"/>
<path d="M896.5 425.0 V527.0" stroke="#8f8a88"/>
<path d="M945.5 424.5 V527.5"/>
</g>
<text x="578.0" y="417.6">帧头</text>
<text x="798.0" y="417.6">应用数据</text>
<text x="629.0" y="462.0">副帧头</text>
<text x="677.5" y="462.0">请求目</text>
<text x="677.5" y="479.0">标网络</text>
<text x="677.5" y="496.0">编号</text>
<text x="726.0" y="462.0">请求目</text>
<text x="726.0" y="479.0">标站号</text>
<text x="775.0" y="462.0">请求目</text>
<text x="775.0" y="479.0">标模块</text>
<text x="775.0" y="496.0"><tspan font-size="12.5" letter-spacing="-.6">I/O</tspan>编号</text>
<text x="824.0" y="462.0">请求目</text>
<text x="824.0" y="479.0">标多点</text>
<text x="824.0" y="496.0">站号</text>
<text x="872.5" y="462.0">响应数</text>
<text x="872.5" y="479.0">据长</text>
<text x="921.0" y="462.0">结束</text>
<text x="921.0" y="479.0">代码</text>
<text x="970.0" y="462.0">响应</text>
<text x="970.0" y="479.0">数据</text>
<g transform="translate(0,0)">
<g fill="none" stroke="#3a3331" stroke-width="1">
<path d="M551 795.5 H1242.5"/>
<rect x="708.5" y="762.5" width="90" height="33"/><rect x="798.5" y="762.5" width="150" height="33"/>
<rect x="990.5" y="795.5" width="90" height="33"/><rect x="1080.5" y="795.5" width="150" height="33"/>
<path stroke-width="1.25" d="M708.5 762.5 H699.5 C695 763 693.5 767 695 772 C696.5 777 700.5 781 701 786 C701.5 791 700 794.5 697.5 795.5"/>
<path stroke-width="1.25" d="M990.5 795.5 H981.5 C977 796 975.5 800 977 805 C978.5 810 982.5 814 983 819 C983.5 824 982 827.5 979.5 828.5 H990.5"/>
</g><g fill="none" stroke="#55504e" stroke-width=".9">
<path d="M708.5 757.0 Q708.5 753.5 712.0 753.5 H825.5 L828.5 750.0 L831.5 753.5 H945.0 Q948.5 753.5 948.5 757.0"/>
<path d="M708.5 802.0 Q708.5 805.5 712.0 805.5 H750.2 L753.2 809.0 L756.2 805.5 H794.5 Q798.0 805.5 798.0 802.0"/>
<path d="M799.0 802.0 Q799.0 805.5 802.5 805.5 H870.8 L873.8 809.0 L876.8 805.5 H945.0 Q948.5 805.5 948.5 802.0"/>
<path d="M990.5 790.0 Q990.5 786.5 994.0 786.5 H1032.2 L1035.2 783.0 L1038.2 786.5 H1076.5 Q1080.0 786.5 1080.0 790.0"/>
<path d="M1081.0 790.0 Q1081.0 786.5 1084.5 786.5 H1152.8 L1155.8 783.0 L1158.8 786.5 H1227.0 Q1230.5 786.5 1230.5 790.0"/>
<path d="M990.5 835.0 Q990.5 838.5 994.0 838.5 H1107.5 L1110.5 842.0 L1113.5 838.5 H1227.0 Q1230.5 838.5 1230.5 835.0"/>
</g>
<text x="829" y="741">应用数据</text>
<text x="551.5" y="784" text-anchor="start">对象设备侧</text>
<text x="551.5" y="827.5" text-anchor="start">以太网搭载模块侧</text>
<text x="753.5" y="784">副帧头</text><text x="873.5" y="784">文本<tspan dx="2.5">(</tspan>指令<tspan dx=".5">)</tspan></text>
<text x="750.5" y="826.5">4字节</text><text x="875" y="827.5">根据功能会有所不同</text>
<text x="1035.5" y="816.7">副帧头</text><text x="1155" y="816.7">文本<tspan dx="2.5">(</tspan>响应<tspan dx=".5">)</tspan></text>
<text x="1034.0" y="776">4字节</text>
<text x="1157" y="758">根据功能、正常/异常</text><text x="1157" y="775">结束会有所不同</text>
<text x="1110.5" y="862.5">应用数据</text>
</g>
<g transform="translate(0,162)">
<g fill="none" stroke="#3a3331" stroke-width="1">
<path d="M551 795.5 H1242.5"/>
<rect x="708.5" y="762.5" width="90" height="33"/><rect x="798.5" y="762.5" width="150" height="33"/>
<rect x="990.5" y="795.5" width="90" height="33"/><rect x="1080.5" y="795.5" width="150" height="33"/>
<path stroke-width="1.25" d="M708.5 762.5 H699.5 C695 763 693.5 767 695 772 C696.5 777 700.5 781 701 786 C701.5 791 700 794.5 697.5 795.5"/>
<path stroke-width="1.25" d="M990.5 795.5 H981.5 C977 796 975.5 800 977 805 C978.5 810 982.5 814 983 819 C983.5 824 982 827.5 979.5 828.5 H990.5"/>
</g><g fill="none" stroke="#55504e" stroke-width=".9">
<path d="M708.5 757.0 Q708.5 753.5 712.0 753.5 H825.5 L828.5 750.0 L831.5 753.5 H945.0 Q948.5 753.5 948.5 757.0"/>
<path d="M708.5 802.0 Q708.5 805.5 712.0 805.5 H750.2 L753.2 809.0 L756.2 805.5 H794.5 Q798.0 805.5 798.0 802.0"/>
<path d="M799.0 802.0 Q799.0 805.5 802.5 805.5 H870.8 L873.8 809.0 L876.8 805.5 H945.0 Q948.5 805.5 948.5 802.0"/>
<path d="M990.5 790.0 Q990.5 786.5 994.0 786.5 H1032.2 L1035.2 783.0 L1038.2 786.5 H1076.5 Q1080.0 786.5 1080.0 790.0"/>
<path d="M1081.0 790.0 Q1081.0 786.5 1084.5 786.5 H1152.8 L1155.8 783.0 L1158.8 786.5 H1227.0 Q1230.5 786.5 1230.5 790.0"/>
<path d="M990.5 835.0 Q990.5 838.5 994.0 838.5 H1107.5 L1110.5 842.0 L1113.5 838.5 H1227.0 Q1230.5 838.5 1230.5 835.0"/>
</g>
<text x="829" y="741">应用数据</text>
<text x="551.5" y="784" text-anchor="start">对象设备侧</text>
<text x="551.5" y="826.8" text-anchor="start">以太网搭载模块侧</text>
<text x="753.5" y="784">副帧头</text><text x="873.5" y="784">文本<tspan dx="2.5">(</tspan>指令<tspan dx=".5">)</tspan></text>
<text x="753.5" y="825.0">2字节</text><text x="875" y="826.0">根据功能会有所不同</text>
<text x="1035.5" y="816.7">副帧头</text><text x="1155" y="816.7">文本<tspan dx="2.5">(</tspan>响应<tspan dx=".5">)</tspan></text>
<text x="1035.0" y="776">2字节</text>
<text x="1157" y="758">根据功能、正常/异常</text><text x="1157" y="775">结束会有所不同</text>
<text x="1110.5" y="865.5">应用数据</text>
</g>
</g></svg>
</div>
<div class="abs" style="left:1389px;top:45px;width:17px;height:891px;background:#f0f0f0"></div>
<div class="abs" style="left:1390px;top:89px;width:15px;height:36px;background:#c9c9c9"></div>
<svg style="left:1392px;top:61px" width="11" height="9" viewBox="0 0 11 9"><path d="M.8 8 L5.5 3 L10.2 8" fill="none" stroke="#505050" stroke-width="2.6"/></svg>
<svg style="left:1392px;top:908px" width="11" height="9" viewBox="0 0 11 9"><path d="M.8 1 L5.5 6 L10.2 1" fill="none" stroke="#505050" stroke-width="2.6"/></svg>
</div>
<!-- ================= STATUS BAR ================= -->
<div id="status">
  <div class="abs st" style="left:7px;top:0"><span class="l">[JY997D59101-J] MELSEC iQ-F FX5</span>用户手册<span class="l"> (SLMP</span>篇<span class="l">)</span></div>
  <svg style="left:1725px;top:4px" width="12" height="19" viewBox="0 0 12 19"><path d="M0 0 H7.5 L12 4.5 V19 H0 Z" fill="#dcdcdc"/><path d="M7.5 0 L12 4.5 H7.5 Z" fill="#9a9a9a"/><text x="6" y="16" font-family="Liberation Sans, sans-serif" font-size="10" text-anchor="middle" fill="#000">P</text></svg>
  <div class="abs st" style="left:1739.5px;top:0"><span class="l">JY997D59101-2E</span></div>
</div>
</body>
</html>
